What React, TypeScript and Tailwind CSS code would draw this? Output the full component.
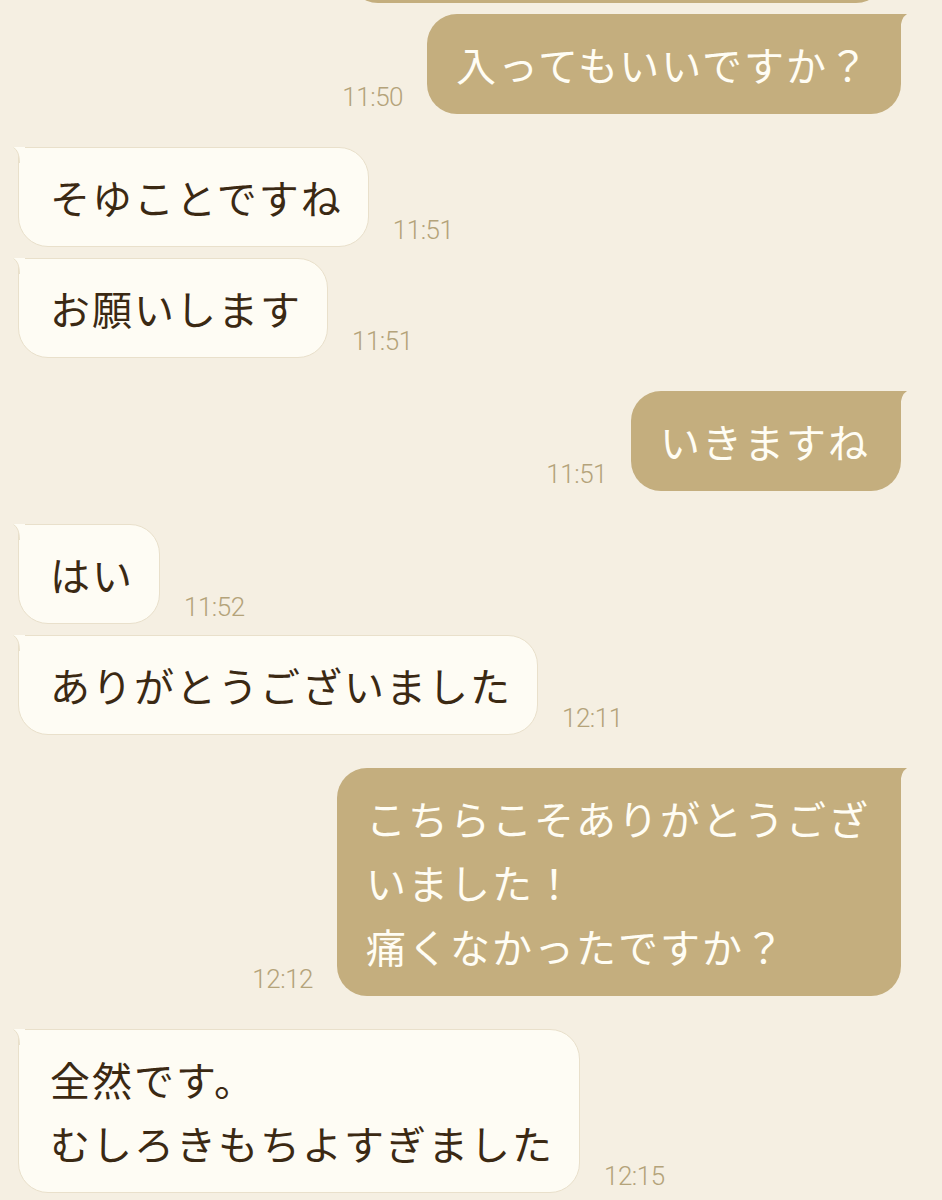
import React from 'react';

type Message = {
  side: 'left' | 'right';
  lines: string[];
  time?: string;
  partial?: boolean;
};

const messages: Message[] = [
  { side: 'right', lines: ['　'], partial: true },
  { side: 'right', lines: ['入ってもいいですか？'], time: '11:50' },
  { side: 'left', lines: ['そゆことですね'], time: '11:51' },
  { side: 'left', lines: ['お願いします'], time: '11:51' },
  { side: 'right', lines: ['いきますね'], time: '11:51' },
  { side: 'left', lines: ['はい'], time: '11:52' },
  { side: 'left', lines: ['ありがとうございました'], time: '12:11' },
  { side: 'right', lines: ['こちらこそありがとうござ', 'いました！', '痛くなかったですか？'], time: '12:12' },
  { side: 'left', lines: ['全然です。', 'むしろきもちよすぎました'], time: '12:15' },
];

function Tail({ side }: { side: 'left' | 'right' }) {
  if (side === 'left') {
    return (
      <svg
        className="absolute -left-[6px] -top-px"
        width="12"
        height="16"
        viewBox="0 0 12 16"
      >
        <path d="M0 0 L12 0 L12 16 L6.5 16 Q6.5 4 0 0 Z" fill="#fefcf4" />
        <path d="M0.5 0.5 Q6.5 4 6.5 16" fill="none" stroke="#e9e0cb" strokeWidth="1" />
      </svg>
    );
  }
  return (
    <svg
      className="absolute -right-[6px] top-0"
      width="12"
      height="16"
      viewBox="0 0 12 16"
    >
      <path d="M12 0 L0 0 L0 16 L5.5 16 Q5.5 4 12 0 Z" fill="#c4ae7e" />
    </svg>
  );
}

function Time({ time }: { time?: string }) {
  if (!time) return null;
  return (
    <span className="mb-[4px] font-['Roboto',sans-serif] font-light text-[26px] tracking-[-0.5px] leading-none text-[#b4a37a] whitespace-nowrap">
      {time}
    </span>
  );
}

function Bubble({ msg }: { msg: Message }) {
  const isLeft = msg.side === 'left';
  return (
    <div
      className={`relative font-['Noto_Sans_CJK_JP',sans-serif] text-[40px] leading-[64px] tracking-[2px] rounded-[30px] whitespace-nowrap ${
        isLeft
          ? 'rounded-tl-none bg-[#fefcf4] text-[#3b2913] border border-[#e9e0cb] py-[17px] pl-[31px] pr-[25px]'
          : 'rounded-tr-none bg-[#c4ae7e] text-[#fffdf4] py-[18px] pl-[29px] pr-[31px]'
      }`}
    >
      <Tail side={msg.side} />
      {msg.lines.map((line, i) => (
        <div key={i}>{line}</div>
      ))}
    </div>
  );
}

export default function App() {
  return (
    <div className="min-h-screen h-[1200px] overflow-hidden bg-[#f5efe2]">
      <div className="flex flex-col pl-[18px] pr-[41px]">
        {messages.map((msg, i) => {
          const prev = messages[i - 1];
          const sameSide = prev && prev.side === msg.side;
          const spacing = i === 0 ? '-mt-[97px]' : sameSide ? 'mt-[11px]' : 'mt-[33px]';
          if (msg.partial) {
            return (
              <div key={i} className={`flex justify-end ${spacing}`}>
                <div className="w-[538px] h-[100px] rounded-[30px] bg-[#c4ae7e] mr-[15px]" />
              </div>
            );
          }
          return msg.side === 'left' ? (
            <div key={i} className={`flex items-end gap-[24px] ${spacing}`}>
              <Bubble msg={msg} />
              <Time time={msg.time} />
            </div>
          ) : (
            <div key={i} className={`flex items-end justify-end gap-[24px] ${spacing}`}>
              <Time time={msg.time} />
              <Bubble msg={msg} />
            </div>
          );
        })}
      </div>
    </div>
  );
}
